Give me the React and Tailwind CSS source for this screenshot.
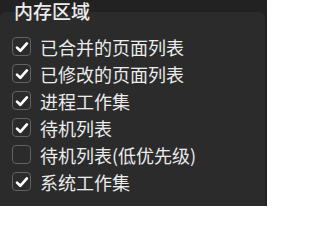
import React from 'react';

const ITEMS = [
  { label: '已合并的页面列表', checked: true },
  { label: '已修改的页面列表', checked: true },
  { label: '进程工作集', checked: true },
  { label: '待机列表', checked: true },
  { label: '待机列表(低优先级)', checked: false },
  { label: '系统工作集', checked: true },
];

function Check({ checked }){
  return (
    <span className="w-[19px] h-[19px] shrink-0 rounded-[4px] border border-[#626262] flex items-center justify-center">
      {checked && (
        <svg width="14" height="14" viewBox="0 0 14 14">
          <path d="M2 7.6 L5.3 10.8 L11.9 3.4" fill="none" stroke="#ffffff" strokeWidth="2.7" strokeLinecap="round" strokeLinejoin="round" />
        </svg>
      )}
    </span>
  );
}

export default function App(){
  return (
    <div className="w-[267px] h-[206px] overflow-hidden bg-[#222222] text-[#ececec] pt-[12px]" style={{ fontFamily: '"Noto Sans CJK SC", "Noto Sans", sans-serif' }}>
      <div className="flow-root h-[194px] rounded-t-[6px] bg-[#2b2b2b] w-[265px]">
        <div className="-mt-[12px] pl-[14px] text-[19px] leading-[22px] font-medium">内存区域</div>
        <div className="flex flex-col gap-[8px] pl-[12px] pt-[15px]">
          {ITEMS.map((it,i)=> (
            <div key={i} className="flex items-center gap-[9px] h-[19px]">
              <Check checked={it.checked} />
              <span className="text-[18px] leading-[18px] whitespace-nowrap">{it.label}</span>
            </div>
          ))}
        </div>
      </div>
    </div>
  );
}
